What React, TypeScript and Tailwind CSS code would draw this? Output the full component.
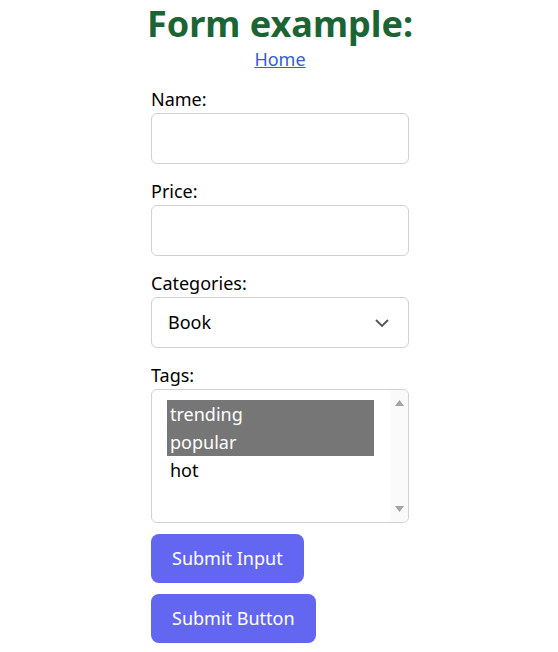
import React from 'react';

const tags = [
  { label: 'trending', selected: true },
  { label: 'popular', selected: true },
  { label: 'hot', selected: false },
];

const Field: React.FC<{ label: string; children: React.ReactNode }> = ({ label, children }) => (
  <div className="mb-[14px]">
    <label className="block text-[18px] leading-[26px] text-black">{label}</label>
    <div className="mt-[1px]">{children}</div>
  </div>
);

const App: React.FC = () => {
  return (
    <div className="flex min-h-[652px] justify-center bg-white pl-[2px] font-['Noto_Sans',sans-serif]">
      <div className="w-[258px] pt-[2px]">
        <h1 className="-mx-4 text-center text-[36px] leading-[44px] font-bold whitespace-nowrap text-[#1b6535]">
          Form example:
        </h1>
        <div className="text-center text-[18px] leading-[26px]">
          <a href="#" className="text-[#2f5fd3] underline">Home</a>
        </div>

        <form className="mt-[14px]" onSubmit={(e) => e.preventDefault()}>
          <Field label="Name:">
            <input type="text" className="block h-[51px] w-full rounded-md border border-[#d1d1d1] px-4 text-[18px] outline-none" />
          </Field>
          <Field label="Price:">
            <input type="text" className="block h-[51px] w-full rounded-md border border-[#d1d1d1] px-4 text-[18px] outline-none" />
          </Field>
          <Field label="Categories:">
            <div className="flex h-[51px] w-full items-center justify-between rounded-md border border-[#d1d1d1] pr-[18px] pl-4 text-[18px]">
              <span>Book</span>
              <svg width="16" height="10" viewBox="0 0 16 10" fill="none" stroke="#555" strokeWidth="1.8">
                <path d="M2 2l6 6 6-6" />
              </svg>
            </div>
          </Field>
          <Field label="Tags:">
            <div className="flex h-[134px] w-full overflow-hidden rounded-md border border-[#d1d1d1]">
              <ul className="flex-1 pt-[10px] pr-[16px] pl-[15px] text-[18px] leading-[28px]">
                {tags.map((t) => (
                  <li key={t.label} className={t.selected ? 'bg-[#767676] px-[3px] text-white' : 'px-[3px] text-black'}>
                    {t.label}
                  </li>
                ))}
              </ul>
              <div className="flex w-[18px] flex-col items-center justify-between bg-[#fafafa] py-[10px]">
                <svg width="9" height="6" viewBox="0 0 9 6"><path d="M4.5 0L9 6H0z" fill="#a3a3a3" /></svg>
                <svg width="9" height="6" viewBox="0 0 9 6"><path d="M0 0h9L4.5 6z" fill="#a3a3a3" /></svg>
              </div>
            </div>
          </Field>

          <div className="-mt-[3px] flex flex-col items-start gap-[11px]">
            <input type="submit" value="Submit Input" className="h-[49px] rounded-lg bg-[#6366f1] px-[21px] text-[18px] text-white" />
            <button type="submit" className="h-[49px] rounded-lg bg-[#6366f1] px-[21px] text-[18px] text-white">
              Submit Button
            </button>
          </div>
        </form>
      </div>
    </div>
  );
};

export default App;
